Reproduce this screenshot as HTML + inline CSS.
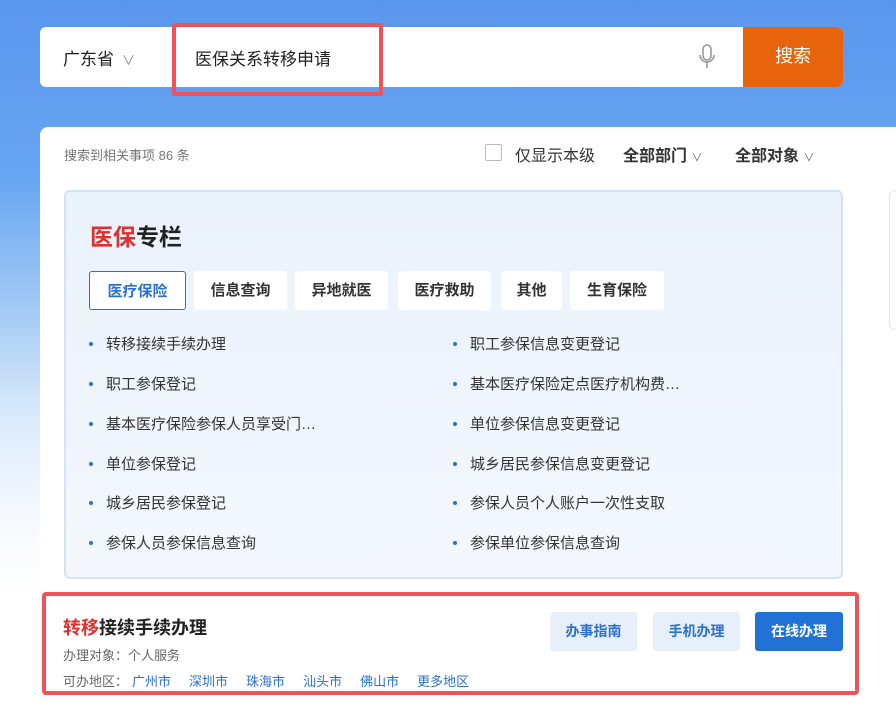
<!DOCTYPE html>
<html style="height:705px;overflow:hidden;background:#fff"><head><meta charset="utf-8"><style>
*{margin:0;padding:0;box-sizing:border-box}
body{width:896px;height:705px;overflow:hidden;position:relative;font-family:"Liberation Sans","Noto Sans CJK SC",sans-serif;background:linear-gradient(180deg,#5a96ee 0px,#67a6f2 180px,#a9cdf6 320px,#dcebfb 420px,#f6faff 520px,#fff 600px)}
.search{position:absolute;left:40px;top:27px;width:803px;height:60px;background:#fff;border-radius:6px}
.prov{position:absolute;left:23px;top:18px;font-size:17px;color:#222}
.prov span{color:#888;font-size:13px;margin-left:8px}
.q{position:absolute;left:195px;top:45px;font-size:17px;color:#222}
.hl{position:absolute;left:172px;top:23px;width:211px;height:73px;border:4px solid #f0525a;border-radius:3px}
.btn{position:absolute;left:743px;top:27px;width:100px;height:60px;background:#e8640c;border-radius:0 6px 6px 0;color:#fff;font-size:18px;text-align:center;line-height:58px}
.card{position:absolute;left:40px;top:127px;width:870px;height:578px;background:#fff;border-radius:8px 8px 0 0}
.side{position:absolute;left:889px;top:190px;width:20px;height:140px;border:1px solid #e6e6e6;border-radius:6px;background:#fff}
.cnt{position:absolute;left:64px;top:145px;font-size:13px;color:#777}
.chk{position:absolute;left:485px;top:144px;width:17px;height:17px;border:1px solid #bbb;border-radius:2px}
.f{position:absolute;top:142px;font-size:16px;color:#333}
.f b{font-weight:bold}
.panel{position:absolute;left:64px;top:190px;width:779px;height:389px;border:2px solid #d3e3f6;border-radius:6px;background:linear-gradient(180deg,#eaf2fc,#f4f8fe)}
.title{position:absolute;left:90px;top:218px;font-size:23px;font-weight:bold;color:#222}
.tab{position:absolute;top:271px;height:39px;background:#fff;border-radius:3px;font-size:15px;font-weight:bold;color:#333;text-align:center;line-height:39px}
.tab.on{border:1px solid #2b6fd0;color:#2b6fd0}
.it{position:absolute;font-size:15px;color:#333}
.it:before{content:"";position:absolute;left:-17px;top:9px;width:4px;height:4px;border-radius:50%;background:#2b6fd0}
.res{position:absolute;left:42px;top:592px;width:817px;height:103px;border:4px solid #f0525a;border-radius:4px;background:#fff}
.b2{position:absolute;top:612px;height:39px;border-radius:3px;font-size:14px;font-weight:bold;text-align:center;line-height:39px}
.lnk{color:#2b6fd0;margin-right:18px}
</style></head><body>
<div class="search"><div class="prov">广东省<span>∨</span></div>
<svg style="position:absolute;left:658px;top:17px" width="18" height="26" viewBox="0 0 18 26"><rect x="5" y="1" width="8" height="15" rx="4" fill="none" stroke="#999" stroke-width="1.6"/><path d="M2 11a7 7 0 0 0 14 0M9 18v6" fill="none" stroke="#999" stroke-width="1.6"/></svg></div>
<div class="q">医保关系转移申请</div>
<div class="hl"></div>
<div class="btn">搜索</div>
<div class="card"></div><div class="side"></div>
<div class="cnt">搜索到相关事项 86 条</div>
<div class="chk"></div>
<div class="f" style="left:515px">仅显示本级</div>
<div class="f" style="left:623px"><b>全部部门</b> <span style="font-size:11px;color:#666">∨</span></div>
<div class="f" style="left:735px"><b>全部对象</b> <span style="font-size:11px;color:#666">∨</span></div>
<div class="panel"></div>
<div class="title"><span style="color:#e0302e">医保</span>专栏</div>
<div class="tab on" style="left:89px;width:97px">医疗保险</div>
<div class="tab" style="left:194px;width:93px">信息查询</div>
<div class="tab" style="left:295px;width:93px">异地就医</div>
<div class="tab" style="left:398px;width:93px">医疗救助</div>
<div class="tab" style="left:501px;width:61px">其他</div>
<div class="tab" style="left:570px;width:94px">生育保险</div>
<div class="it" style="left:106px;top:333px">转移接续手续办理</div>
<div class="it" style="left:106px;top:373px">职工参保登记</div>
<div class="it" style="left:106px;top:413px">基本医疗保险参保人员享受门…</div>
<div class="it" style="left:106px;top:453px">单位参保登记</div>
<div class="it" style="left:106px;top:492px">城乡居民参保登记</div>
<div class="it" style="left:106px;top:532px">参保人员参保信息查询</div>
<div class="it" style="left:470px;top:333px">职工参保信息变更登记</div>
<div class="it" style="left:470px;top:373px">基本医疗保险定点医疗机构费…</div>
<div class="it" style="left:470px;top:413px">单位参保信息变更登记</div>
<div class="it" style="left:470px;top:453px">城乡居民参保信息变更登记</div>
<div class="it" style="left:470px;top:492px">参保人员个人账户一次性支取</div>
<div class="it" style="left:470px;top:532px">参保单位参保信息查询</div>
<div class="res"></div>
<div style="position:absolute;left:63px;top:614px;font-size:18px;font-weight:bold;color:#222"><span style="color:#e0302e">转移</span>接续手续办理</div>
<div style="position:absolute;left:63px;top:645px;font-size:13px;color:#666">办理对象：个人服务</div>
<div style="position:absolute;left:63px;top:671px;font-size:13px;color:#666">可办地区：<span class="lnk" style="margin-left:4px">广州市</span><span class="lnk">深圳市</span><span class="lnk">珠海市</span><span class="lnk">汕头市</span><span class="lnk">佛山市</span><span class="lnk">更多地区</span></div>
<div class="b2" style="left:550px;width:87px;background:#e6effa;color:#2b6fd0">办事指南</div>
<div class="b2" style="left:653px;width:87px;background:#e6effa;color:#2b6fd0">手机办理</div>
<div class="b2" style="left:755px;width:88px;background:#2271d6;color:#fff">在线办理</div>
</body></html>
